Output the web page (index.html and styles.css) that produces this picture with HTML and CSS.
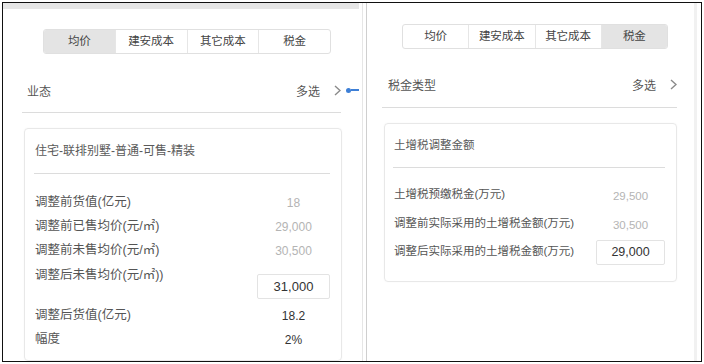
FILE: index.html
```html
<!DOCTYPE html>
<html lang="zh-CN">
<head>
    <meta charset="UTF-8">
    <meta name="viewport" content="width=device-width, initial-scale=1.0">
    <title>货值调整</title>
    <link rel="stylesheet" href="styles.css">
</head>
<body>
    <div class="frame">
        <!-- 均价 -->
        <div class="screen screen-left">
            <div class="topbar"></div>
            <div class="tabs">
                <span class="tab active">均价</span>
                <span class="tab">建安成本</span>
                <span class="tab">其它成本</span>
                <span class="tab">税金</span>
            </div>
            <div class="filter">
                <span class="filter-label">业态</span>
                <span class="filter-value">多选</span>
                <svg class="chevron" width="7" height="11" viewBox="0 0 7 11"><polyline points="1,1 6,5.5 1,10" fill="none" stroke="#8a8a8a" stroke-width="1.4"/></svg>
                <span class="link"><i class="dot"></i><i class="wire"></i></span>
            </div>
            <div class="card">
                <div class="card-title">住宅-联排别墅-普通-可售-精装</div>
                <div class="fields">
                    <div class="field">
                        <span class="label">调整前货值(亿元)</span>
                        <span class="value muted">18</span>
                    </div>
                    <div class="field">
                        <span class="label">调整前已售均价(元/㎡)</span>
                        <span class="value muted">29,000</span>
                    </div>
                    <div class="field">
                        <span class="label">调整前未售均价(元/㎡)</span>
                        <span class="value muted">30,500</span>
                    </div>
                    <div class="field edit">
                        <span class="label">调整后未售均价(元/㎡))</span>
                        <span class="value input">31,000</span>
                    </div>
                    <div class="field">
                        <span class="label">调整后货值(亿元)</span>
                        <span class="value">18.2</span>
                    </div>
                    <div class="field">
                        <span class="label">幅度</span>
                        <span class="value">2%</span>
                    </div>
                </div>
            </div>
        </div>

        <div class="gap"></div>

        <!-- 税金 -->
        <div class="screen screen-right">
            <div class="tabs">
                <span class="tab">均价</span>
                <span class="tab">建安成本</span>
                <span class="tab">其它成本</span>
                <span class="tab active">税金</span>
            </div>
            <div class="filter">
                <span class="filter-label">税金类型</span>
                <span class="filter-value">多选</span>
                <svg class="chevron" width="7" height="11" viewBox="0 0 7 11"><polyline points="1,1 6,5.5 1,10" fill="none" stroke="#8a8a8a" stroke-width="1.4"/></svg>
            </div>
            <div class="card">
                <div class="card-title">土增税调整金额</div>
                <div class="fields">
                    <div class="field">
                        <span class="label">土增税预缴税金(万元)</span>
                        <span class="value muted">29,500</span>
                    </div>
                    <div class="field">
                        <span class="label">调整前实际采用的土增税金额(万元)</span>
                        <span class="value muted">30,500</span>
                    </div>
                    <div class="field edit">
                        <span class="label">调整后实际采用的土增税金额(万元)</span>
                        <span class="value input">29,000</span>
                    </div>
                </div>
            </div>
        </div>
    </div>
</body>
</html>
```

FILE: styles.css
```css
body {
    margin: 0;
    background-color: white;
    font-family: "Liberation Sans", "Noto Sans CJK SC", sans-serif;
    color: #555;
}
.frame {
    box-sizing: border-box;
    width: 700px;
    height: 360px;
    margin: 2px 0 0 2px;
    border: 1px solid #111;
    display: flex;
    overflow: hidden;
}
.screen {
    box-sizing: border-box;
    display: flex;
    flex-direction: column;
}
.screen-left {
    width: 360px;
    border-right: 1px solid #e6e6e6;
    font-size: 12.5px;
}
.screen-right {
    flex: 1;
    margin-right: 4px;
    border-right: 3px solid #f1f1f1;
    font-size: 11.5px;
}
.gap {
    width: 4px;
    border-right: 1px solid #cfcfcf;
    box-sizing: border-box;
}
.topbar {
    height: 6px;
    margin-right: 3px;
    background-color: #e6e6e6;
}

/* segmented tabs */
.tabs {
    display: flex;
    height: 25px;
    box-sizing: border-box;
    border: 1px solid #e0e0e0;
    border-radius: 3px;
    overflow: hidden;
    font-size: 11.5px;
}
.screen-left .tabs {
    width: 288px;
    margin: 20px 0 0 40px;
}
.screen-right .tabs {
    width: 266px;
    margin: 21px 0 0 35px;
}
.tab {
    flex: 1;
    text-align: center;
    line-height: 23px;
    color: #444;
    border-left: 1px solid #e6e6e6;
}
.tab:first-child {
    border-left: none;
}
.tab.active {
    background-color: #e4e4e4;
}

/* filter row */
.filter {
    display: flex;
    align-items: center;
    height: 28px;
    padding-bottom: 8px;
    border-bottom: 1px solid #dcdcdc;
    font-size: 12px;
}
.screen-left .filter {
    margin: 22px 21px 0 19px;
}
.screen-right .filter {
    margin: 21px 17px 0 15px;
    padding-bottom: 9px;
}
.filter-label {
    flex: 1;
    padding-left: 5px;
}
.screen-right .filter-label {
    padding-left: 6px;
}
.chevron {
    margin-left: 14px;
    flex-shrink: 0;
}
.link {
    display: flex;
    align-items: center;
    width: 13px;
    margin-left: 5px;
    margin-right: -18px;
    flex-shrink: 0;
}
.dot {
    width: 5px;
    height: 5px;
    border-radius: 50%;
    background-color: #3d7fd6;
}
.wire {
    flex: 1;
    height: 1.5px;
    background-color: #3d7fd6;
}

/* cards */
.card {
    border: 1px solid #e8e8e8;
    border-radius: 4px;
    box-shadow: 0 0 2px rgba(0, 0, 0, 0.04);
}
.screen-left .card {
    margin: 15px 20px 0 21px;
    padding: 0 11px 11px 9px;
}
.screen-right .card {
    margin: 15px 17px 0 17px;
    padding: 0 11px 16px 8px;
}
.card-title {
    padding: 14px 0 13px 1px;
    line-height: 17px;
    border-bottom: 1px solid #dcdcdc;
    color: #5a5a5a;
}
.screen-left .card-title {
    font-size: 12px;
}
.screen-right .card-title {
    padding: 13px 0 13px 1px;
}
.fields {
    padding-top: 14px;
}
.screen-right .fields {
    padding-top: 10px;
}
.field {
    display: flex;
    align-items: center;
    height: 24px;
}
.screen-right .field {
    height: 29px;
}
.label {
    flex: 1;
    padding-left: 1px;
    white-space: nowrap;
}
.value {
    width: 73px;
    margin-top: 6px;
    text-align: center;
    font-size: 12px;
    color: #333;
}
.screen-right .value {
    width: 69px;
    font-size: 11.5px;
}
.value.muted {
    color: #b4b4b4;
}
.field.edit {
    height: 34px;
    align-items: flex-start;
    margin: 5px 0 2px;
}
.field.edit .label {
    line-height: 20px;
}
.value.input {
    box-sizing: border-box;
    height: 25px;
    margin-top: 9px;
    line-height: 23px;
    border: 1px solid #e3e3e3;
    border-radius: 2px;
    font-size: 13px;
}
.screen-right .field.edit {
    height: 29px;
    align-items: center;
    margin: 0;
}
.screen-right .value.input {
    margin-top: 3px;
    font-size: 12.5px;
}
```
